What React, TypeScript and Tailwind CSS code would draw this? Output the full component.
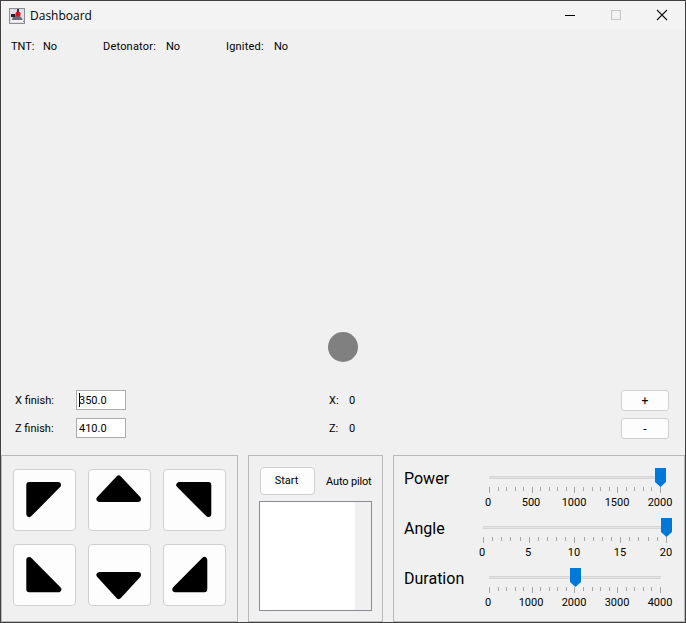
const font = { fontFamily: 'Roboto, "Noto Sans", sans-serif' };

function Arrow({ points }: { points: string }) {
  return (
    <button className="w-[63px] h-[62px] bg-[#fdfdfd] border border-[#d0d0d0] rounded-[4px] block p-0">
      <svg width="63" height="62" viewBox="0 0 63 62" className="-m-px block">
        <polygon points={points} fill="#000" stroke="#000" strokeWidth="6" strokeLinejoin="round" />
      </svg>
    </button>
  );
}

function Slider({
  label, labels, width, minor, value, labelWidth,
}: {
  label: string; labels: string[]; width: number; minor: number; value: number; labelWidth: number;
}) {
  const count = (labels.length - 1) * (minor + 1) + 1;
  const thumbLeft = Math.ceil(value * (width - 1)) - 5;
  return (
    <div className="flex h-[50px]">
      <div className="text-[16px] leading-[22px] text-black" style={{ width: labelWidth }}>{label}</div>
      <div className="relative" style={{ width }}>
        <div className="h-[3px] bg-[#e3e3e3] border-y border-[#d6d6d6] mt-[8px]" />
        <div className="flex justify-between items-start mt-[8px] h-[5px]">
          {Array.from({ length: count }).map((_, i) => (
            <div key={i} className={"w-px bg-[#a8a8a8] " + (i % (minor + 1) === 0 ? "h-[6px]" : "h-[4px]")} />
          ))}
        </div>
        <div className="flex justify-between mt-[3px] pr-[1px] -ml-px">
          {labels.map((l) => (
            <div key={l} className="w-0 flex justify-center text-[11px] leading-[15px] text-black whitespace-nowrap">{l}</div>
          ))}
        </div>
        <svg width="11" height="19" viewBox="0 0 11 19" className="absolute top-0" style={{ left: thumbLeft }}>
          <polygon points="0,0 11,0 11,14 5.5,19 0,14" fill="#0078d7" />
        </svg>
      </div>
    </div>
  );
}

export default function App() {
  return (
    <div style={font} className="w-[686px] h-[623px] bg-[#f0f0f0] border border-[#404040] flex flex-col overflow-hidden text-[11px] text-black">
      <div className="h-[29px] bg-[#f3f3f3] flex items-center shrink-0">
        <svg width="16" height="16" viewBox="0 0 16 16" className="ml-[8px]">
          <rect x="0" y="0" width="16" height="16" fill="#dfe0e6" />
          <rect x="0.5" y="0.5" width="15" height="15" fill="none" stroke="#8c8c96" />
          <polygon points="2,14 4,9 8,6 12,9 15,14" fill="#6c6c78" />
          <rect x="2" y="12" width="12" height="2" fill="#f4f4f4" />
          <rect x="2" y="6" width="4" height="3" fill="#20202a" />
          <circle cx="9" cy="6" r="2.6" fill="#d8141c" />
          <rect x="8" y="1" width="2" height="3" fill="#30303a" />
        </svg>
        <span className="ml-[5px] text-[12px] leading-[16px]" style={{ fontFamily: '"Open Sans", sans-serif' }}>Dashboard</span>
        <div className="ml-auto flex items-center">
          <svg width="46" height="29" viewBox="0 0 46 29"><rect x="18" y="14" width="10" height="1" fill="#000" /></svg>
          <svg width="46" height="29" viewBox="0 0 46 29"><rect x="18.5" y="9.5" width="9" height="9" fill="none" stroke="#c4c4c4" /></svg>
          <svg width="46" height="29" viewBox="0 0 46 29"><path d="M18 9 L28 19 M28 9 L18 19" stroke="#111" strokeWidth="1.1" fill="none" /></svg>
        </div>
      </div>

      <div className="flex items-center h-[32px] pl-[10px] pt-[2px] shrink-0">
        <span className="w-[32px]">TNT:</span>
        <span className="w-[60px]">No</span>
        <span className="w-[63px] tracking-[0.2px]">Detonator:</span>
        <span className="w-[60px]">No</span>
        <span className="w-[48px] tracking-[0.2px]">Ignited:</span>
        <span>No</span>
      </div>

      <div className="relative h-[328px] shrink-0">
        <div className="absolute left-[327px] top-[270px] w-[30px] h-[30px] rounded-full bg-[#808080]" />
      </div>

      <div className="h-[65px] shrink-0 flex pl-[14px] pr-[16px]">
        <div className="flex flex-col gap-[8px] w-[125px]">
          <div className="flex items-center h-[20px]">
            <span className="w-[61px] pt-[2px]">X finish:</span>
            <div className="w-[50px] h-[20px] bg-white border border-[#ababab] pl-[2px] leading-[20px] relative">350.0<span className="absolute left-[2px] top-[2px] w-px h-[14px] bg-black" /></div>
          </div>
          <div className="flex items-center h-[20px]">
            <span className="w-[61px] pt-[2px]">Z finish:</span>
            <div className="w-[50px] h-[20px] bg-white border border-[#ababab] pl-[2px] leading-[20px]">410.0</div>
          </div>
        </div>
        <div className="flex flex-col gap-[8px] ml-[189px] w-[60px]">
          <div className="flex items-center h-[20px] pt-[2px]"><span className="w-[20px]">X:</span><span>0</span></div>
          <div className="flex items-center h-[20px] pt-[2px]"><span className="w-[20px]">Z:</span><span>0</span></div>
        </div>
        <div className="flex flex-col gap-[7px] ml-auto">
          <button className="w-[48px] h-[21px] bg-[#fdfdfd] border border-[#d0d0d0] rounded-[3px] text-[12px] leading-[18px]">+</button>
          <button className="w-[48px] h-[21px] bg-[#fdfdfd] border border-[#d0d0d0] rounded-[3px] text-[12px] leading-[18px]">-</button>
        </div>
      </div>

      <div className="flex h-[167px] shrink-0">
        <div className="w-[237px] border border-[#b9b9b9] grid grid-cols-[63px_63px_63px] gap-x-[12px] gap-y-[13px] content-start pl-[11px] pt-[13px]">
          <Arrow points="16.3,16 45,16 16.3,45" />
          <Arrow points="11.5,30 50,30 30.7,9.5" />
          <Arrow points="16.3,16 45.3,16 45.3,45" />
          <Arrow points="16.3,16 45.3,45.3 16.3,45.3" />
          <Arrow points="11.5,31 50,31 30.7,52" />
          <Arrow points="12.3,45.3 41.3,16 41.3,45.3" />
        </div>
        <div className="ml-[10px] w-[135px] border border-[#b9b9b9] pl-[10px] pt-[11px]">
          <div className="flex items-center h-[28px] pl-[1px]">
            <button className="w-[55px] h-[28px] bg-[#fdfdfd] border border-[#d0d0d0] rounded-[4px] pt-[1px] pr-[2px]">Start</button>
            <span className="ml-[11px] pt-[2px] tracking-[-0.15px]">Auto pilot</span>
          </div>
          <div className="mt-[6px] w-[113px] h-[110px] border border-[#8a8a94] bg-white flex justify-end">
            <div className="w-[16px] h-full bg-[#f0f0f0]" />
          </div>
        </div>
        <div className="ml-[10px] flex-1 border border-[#b9b9b9] pl-[10px] pt-[12px]">
          <Slider label="Power" labels={["0", "500", "1000", "1500", "2000"]} width={172} minor={4} value={1} labelWidth={85} />
          <Slider label="Angle" labels={["0", "5", "10", "15", "20"]} width={184} minor={4} value={1} labelWidth={79} />
          <Slider label="Duration" labels={["0", "1000", "2000", "3000", "4000"]} width={172} minor={4} value={0.5} labelWidth={85} />
        </div>
      </div>
    </div>
  );
}
